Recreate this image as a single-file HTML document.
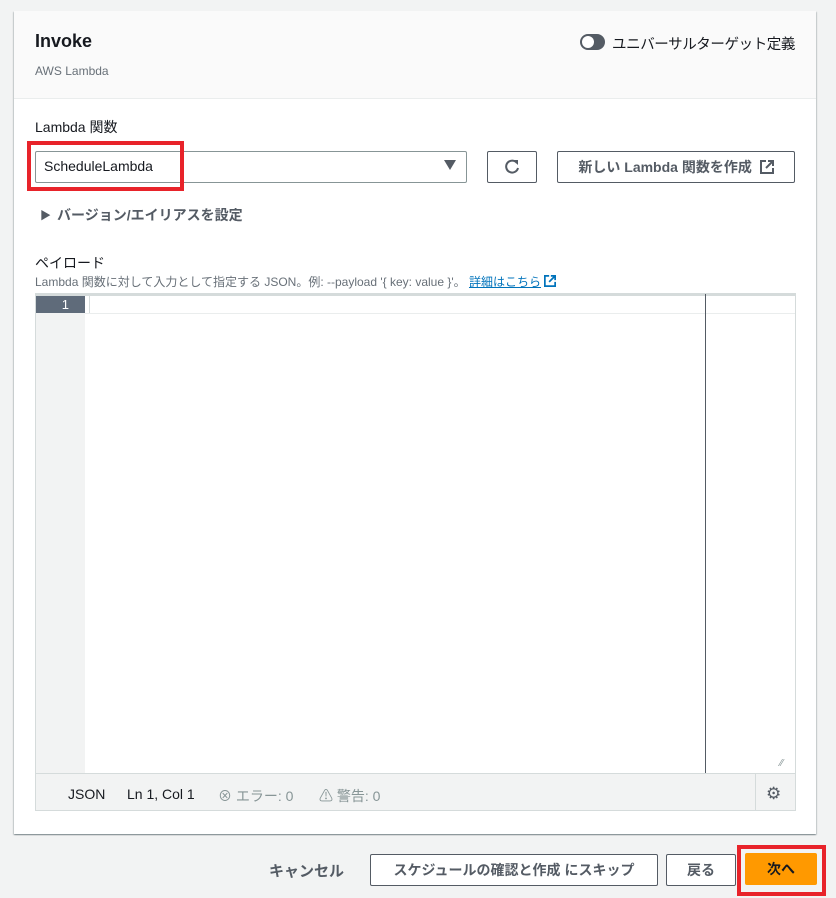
<!DOCTYPE html>
<html><head><meta charset="utf-8"><style>
*{box-sizing:border-box;margin:0;padding:0}
body{width:836px;height:898px;background:#f2f3f3;font-family:"Liberation Sans","Noto Sans CJK JP",sans-serif;color:#16191f;position:relative;overflow:hidden;font-size:14px}
.abs{position:absolute}
.card{left:14px;top:11px;width:802px;height:823px;background:#fff;box-shadow:0 1px 1px rgba(0,28,36,.3),1px 1px 1px rgba(0,28,36,.15),-1px 1px 1px rgba(0,28,36,.15)}
.hdr{left:14px;top:11px;width:802px;height:88px;background:#fafafa;border-bottom:1px solid #eaeded}
.btn{border:1px solid #545b64;background:#fff;border-radius:2px;font-weight:bold;color:#545b64;display:flex;align-items:center;justify-content:center;font-size:14px}
</style></head><body>
<div class="abs card"></div>
<div class="abs hdr"></div>
<div class="abs" style="left:35px;top:31px;font-size:18px;font-weight:bold">Invoke</div>
<div class="abs" style="left:35px;top:64px;font-size:12px;color:#687078">AWS Lambda</div>
<div class="abs" style="left:580px;top:34px;width:25px;height:16px;border-radius:8px;background:#545b64"></div>
<div class="abs" style="left:582px;top:36px;width:12px;height:12px;border-radius:6px;background:#fff"></div>
<div class="abs" style="left:612px;top:33px;font-size:14.5px;letter-spacing:-0.4px;color:#16191f">ユニバーサルターゲット定義</div>

<div class="abs" style="left:35px;top:117px;font-size:14px">Lambda 関数</div>
<div class="abs" style="left:35px;top:151px;width:432px;height:32px;border:1px solid #879596;border-radius:2px"></div>
<div class="abs" style="left:44px;top:158px;font-size:14px">ScheduleLambda</div>
<div class="abs" style="left:444px;top:160px;width:0;height:0;border-left:6px solid transparent;border-right:6px solid transparent;border-top:10px solid #545b64"></div>
<div class="abs" style="left:27px;top:141px;width:157px;height:50px;border:4px solid #e8232a"></div>
<div class="abs btn" style="left:487px;top:151px;width:50px;height:32px">
<svg width="18" height="18" viewBox="0 0 18 18"><path d="M14 5A6 6 0 1 0 15 10" fill="none" stroke="#545b64" stroke-width="2"/><path d="M10 2l5 0 0 5z" fill="#545b64"/></svg></div>
<div class="abs btn" style="left:557px;top:151px;width:238px;height:32px">新しい Lambda 関数を作成&nbsp;&nbsp;<svg width="14" height="14" viewBox="0 0 14 14"><path d="M6 1H1v12h12V8" fill="none" stroke="#545b64" stroke-width="2"/><path d="M8 1h5v5M13 1L6 8" fill="none" stroke="#545b64" stroke-width="2"/></svg></div>

<div class="abs" style="left:40px;top:207px;font-size:11px;color:#545b64">▶</div>
<div class="abs" style="left:57px;top:205px;font-size:14px;font-weight:bold;color:#545b64">バージョン/エイリアスを設定</div>

<div class="abs" style="left:35px;top:253px;font-size:14px">ペイロード</div>
<div class="abs" style="left:35px;top:273px;font-size:12px;color:#687078">Lambda 関数に対して入力として指定する JSON。例: --payload '{ key: value }'。 <span style="color:#0073bb;text-decoration:underline">詳細はこちら</span> <svg width="12" height="12" viewBox="0 0 14 14" style="vertical-align:-1px"><path d="M6 1H1v12h12V8" fill="none" stroke="#0073bb" stroke-width="2"/><path d="M8 1h5v5M13 1L6 8" fill="none" stroke="#0073bb" stroke-width="2"/></svg></div>

<div class="abs" style="left:35px;top:293px;width:761px;height:518px;border:1px solid #d5dbdb;background:#fff"></div>
<div class="abs" style="left:36px;top:294px;width:49px;height:479px;background:#f2f3f3"></div>
<div class="abs" style="left:36px;top:294px;width:759px;height:2px;background:#d5dbdb"></div>
<div class="abs" style="left:36px;top:296px;width:49px;height:17px;background:#5f6b7a;color:#fff;font-size:13px;text-align:right;padding-right:16px;line-height:17px">1</div>
<div class="abs" style="left:85px;top:313px;width:710px;height:1px;background:#eaeded"></div>
<div class="abs" style="left:89px;top:296px;width:1px;height:17px;background:#d5dbdb"></div>
<div class="abs" style="left:705px;top:294px;width:1px;height:479px;background:#545b64"></div>
<div class="abs" style="left:780px;top:758px;font-size:10px;color:#879596">⁄⁄</div>
<div class="abs" style="left:36px;top:773px;width:759px;height:37px;background:#f2f3f3;border-top:1px solid #d5dbdb"></div>
<div class="abs" style="left:755px;top:774px;width:1px;height:36px;background:#d5dbdb"></div>
<div class="abs" style="left:68px;top:786px;font-size:14px">JSON</div>
<div class="abs" style="left:127px;top:786px;font-size:14px">Ln 1, Col 1</div>
<div class="abs" style="left:218px;top:786px;font-size:14px;color:#879596">⊗ エラー: 0</div>
<div class="abs" style="left:319px;top:786px;font-size:14px;color:#879596">⚠ 警告: 0</div>
<div class="abs" style="left:766px;top:784px;font-size:17px;color:#545b64">⚙</div>

<div class="abs" style="left:269px;top:860px;font-size:15px;font-weight:bold;color:#545b64">キャンセル</div>
<div class="abs btn" style="left:370px;top:854px;width:288px;height:32px">スケジュールの確認と作成 にスキップ</div>
<div class="abs btn" style="left:666px;top:854px;width:70px;height:32px">戻る</div>
<div class="abs" style="left:737px;top:845px;width:89px;height:51px;border:4px solid #e8232a"></div>
<div class="abs" style="left:745px;top:853px;width:72px;height:32px;background:#ff9900;border-radius:2px;display:flex;align-items:center;justify-content:center;font-weight:bold;font-size:14px;color:#16191f">次へ</div>
</body></html>
